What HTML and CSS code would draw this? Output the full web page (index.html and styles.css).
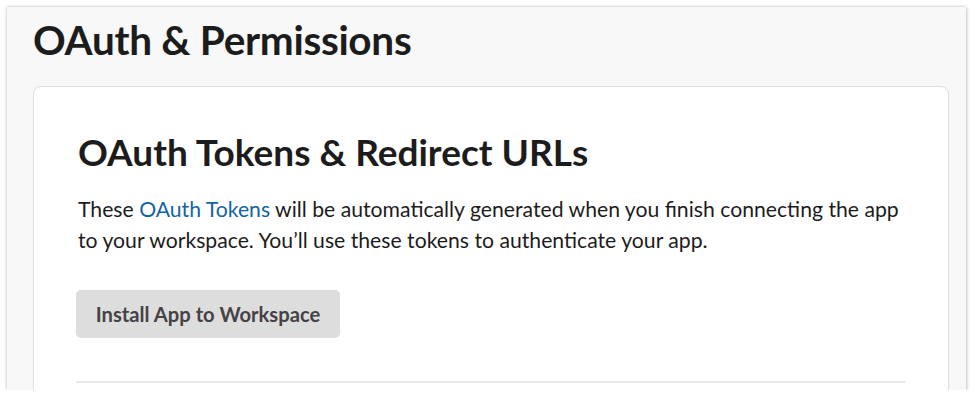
FILE: index.html
```html
<!DOCTYPE html>
<html>
<head>
<meta charset="utf-8">
<link rel="stylesheet" href="styles.css">
</head>
<body>
<div class="frame">
  <h1 class="page-title">OAuth &amp; Permissions</h1>
  <div class="card">
    <h2 class="card-title">OAuth Tokens &amp; Redirect URLs</h2>
    <p class="card-text">These <a class="link" href="#">OAuth Tokens</a> will be automatically generated when you finish connecting the app to your workspace. You’ll use these tokens to authenticate your app.</p>
    <button class="btn">Install App to Workspace</button>
    <hr class="divider">
  </div>
</div>
</body>
</html>
```
FILE: styles.css
```css
html, body {
  margin: 0;
  padding: 0;
  background: #ffffff;
}
body {
  padding: 7px 9px 0 7px;
  font-family: Lato, "Open Sans", sans-serif;
  color: #1d1c1d;
}
.frame {
  width: 959px;
  height: 383px;
  box-sizing: border-box;
  background: #f8f8f8;
  box-shadow: 0 0 3px rgba(0,0,0,0.25), 1px 1px 4px rgba(0,0,0,0.12);
  overflow: hidden;
  padding: 0 17px 0 26px;
}
.page-title {
  margin: 0;
  padding-top: 7px;
  font-size: 40.5px;
  line-height: 52px;
  font-weight: 700;
  letter-spacing: -0.3px;
}
.card {
  margin-top: 20px;
  background: #ffffff;
  border: 1px solid #dddddd;
  border-radius: 8px;
  padding: 42px 40px 0 44px;
  height: 400px;
}
.card-title {
  margin: 0;
  font-size: 37px;
  line-height: 46px;
  font-weight: 700;
}
.card-text {
  margin: 19px 0 0 0;
  font-size: 21.2px;
  line-height: 31px;
  color: #1d1c1d;
}
.link {
  color: #1264a3;
  text-decoration: none;
}
.btn {
  display: block;
  margin: 34px 0 0 -2px;
  width: 264px;
  height: 48px;
  border: none;
  border-radius: 5px;
  background: #dddddd;
  font-family: Lato, sans-serif;
  font-weight: 700;
  font-size: 20.2px;
  color: #454245;
  padding: 0;
}
.divider {
  margin: 43px 0 0 -2px;
  border: none;
  border-top: 2px solid #e8e8e8;
  width: 830px;
}
```
